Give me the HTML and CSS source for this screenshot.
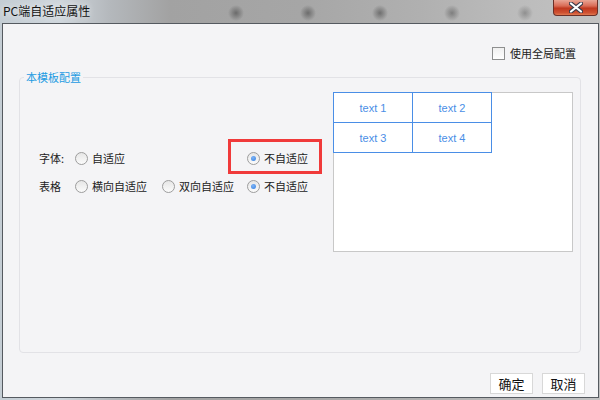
FILE: index.html
```html
<!DOCTYPE html>
<html lang="zh-CN">
<head>
    <meta charset="UTF-8">
    <title>PC端自适应属性</title>
    <link rel="stylesheet" href="styles.css">
</head>
<body>

<div class="window">
    <div class="titlebar">
        <span class="title">PC端自适应属性</span>
        <button class="close-btn" type="button">
            <svg width="14" height="11" viewBox="0 0 14 11">
                <path d="M2 1.5 L12 9.5 M12 1.5 L2 9.5" stroke="#3a3a4a" stroke-width="4.2" stroke-linecap="round"/>
                <path d="M2 1.5 L12 9.5 M12 1.5 L2 9.5" stroke="#ffffff" stroke-width="2.2" stroke-linecap="round"/>
            </svg>
        </button>
    </div>

    <div class="client">
        <div class="global-row">
            <label class="check">
                <span class="check-box"></span>
                使用全局配置
            </label>
        </div>

        <fieldset class="group">
            <legend>本模板配置</legend>

            <div class="group-body">
                <div class="options">
                    <span class="opt-label">字体:</span>
                    <label class="radio"><span class="radio-dot"></span>自适应</label>
                    <span></span>
                    <label class="radio checked highlight"><span class="radio-dot"></span>不自适应</label>

                    <span class="opt-label">表格</span>
                    <label class="radio"><span class="radio-dot"></span>横向自适应</label>
                    <label class="radio"><span class="radio-dot"></span>双向自适应</label>
                    <label class="radio checked"><span class="radio-dot"></span>不自适应</label>
                </div>

                <div class="preview">
                    <table class="preview-table">
                        <tr><td>text 1</td><td>text 2</td></tr>
                        <tr><td>text 3</td><td>text 4</td></tr>
                    </table>
                </div>
            </div>
        </fieldset>

        <div class="footer">
            <button class="btn" type="button">确定</button>
            <button class="btn" type="button">取消</button>
        </div>
    </div>
</div>

</body>
</html>
```

FILE: styles.css
```css
* {
    margin: 0;
    padding: 0;
    box-sizing: border-box;
}

body {
    width: 600px;
    height: 400px;
    overflow: hidden;
    font-family: "Noto Sans CJK SC", "Liberation Sans", sans-serif;
    font-size: 11px;
    color: #222;
}

/* glass frame */
.window {
    height: 400px;
    display: flex;
    flex-direction: column;
    padding: 0 1px 2px 2px;
    background:
        radial-gradient(circle at 236px 13px, rgba(60, 60, 60, 0.55) 0, rgba(70, 70, 70, 0) 8px),
        radial-gradient(circle at 308px 13px, rgba(60, 60, 60, 0.55) 0, rgba(70, 70, 70, 0) 8px),
        radial-gradient(circle at 380px 13px, rgba(60, 60, 60, 0.55) 0, rgba(70, 70, 70, 0) 8px),
        radial-gradient(circle at 452px 13px, rgba(60, 60, 60, 0.45) 0, rgba(70, 70, 70, 0) 8px),
        radial-gradient(circle at 525px 13px, rgba(60, 60, 60, 0.35) 0, rgba(70, 70, 70, 0) 8px),
        linear-gradient(90deg, #c4cdd4 0, #cfd6dc 60px, #b4b8bc 110px, #a2a2a2 170px, #a6a6a6 300px, #b0b0b0 420px, #bcbcbc 520px, #c2c2c2 600px);
}

.titlebar {
    height: 23px;
    display: flex;
    justify-content: space-between;
    align-items: flex-start;
}

.title {
    font-size: 12px;
    line-height: 16px;
    padding: 3px 0 0 1px;
    color: #111;
    text-shadow: 0 0 6px rgba(255, 255, 255, 0.9);
}

.close-btn {
    width: 45px;
    height: 16px;
    margin-right: 1px;
    border: 1px solid #6b3028;
    border-top: none;
    border-radius: 0 0 4px 4px;
    background: linear-gradient(#e9a595 0, #d96b55 40%, #c0381f 55%, #cf5232 85%, #e07a52 100%);
    display: flex;
    justify-content: center;
    align-items: center;
}

.client {
    flex: 1;
    display: flex;
    flex-direction: column;
    border: 1px solid #555a60;
    background-color: #f4f4f6;
}

.global-row {
    display: flex;
    justify-content: flex-end;
    padding: 22px 22px 0 0;
    height: 45px;
}

.check {
    display: flex;
    align-items: center;
    gap: 5px;
    height: 15px;
    line-height: 15px;
}

.check-box {
    width: 13px;
    height: 13px;
    border: 1px solid #8e8f8f;
    background: linear-gradient(#f0f0f0, #ffffff);
}

/* template group */
.group {
    margin: 0 17px 0 16px;
    height: 284px;
    border: 1px solid #e2e2e6;
    border-radius: 4px;
    padding: 0 7px 0 0;
}

.group legend {
    margin-left: 4px;
    padding: 0 2px;
    line-height: 16px;
    color: #1c9be2;
}

.group-body {
    display: flex;
    align-items: flex-start;
}

.options {
    flex: 1;
    display: grid;
    grid-template-columns: 36px 87px 85px auto;
    grid-auto-rows: 28px;
    align-items: center;
    justify-items: start;
    padding: 59px 0 0 19px;
}

.opt-label {
    line-height: 16px;
}

.radio {
    position: relative;
    display: flex;
    align-items: center;
    gap: 4px;
    line-height: 16px;
    white-space: nowrap;
}

.radio-dot {
    width: 13px;
    height: 13px;
    border-radius: 50%;
    border: 1px solid #9d9d9d;
    background: linear-gradient(#e6e6e6, #fbfbfb);
    display: flex;
    justify-content: center;
    align-items: center;
}

.radio.checked .radio-dot::after {
    content: "";
    width: 5px;
    height: 5px;
    border-radius: 50%;
    background: radial-gradient(circle at 40% 35%, #7fb4f5, #2f7de0);
}

/* red annotation frame */
.highlight::after {
    content: "";
    position: absolute;
    left: -19px;
    right: -14px;
    top: -11px;
    bottom: -8px;
    border: 3px solid #f03a3a;
}

.preview {
    width: 240px;
    height: 160px;
    margin-top: 7px;
    border: 1px solid #c8c8c8;
    background-color: #fff;
}

.preview-table {
    border-collapse: collapse;
    margin: -1px 0 0 -1px;
}

.preview-table td {
    width: 79px;
    height: 30px;
    border: 1px solid #4a8ee6;
    text-align: center;
    font-family: "Liberation Sans", sans-serif;
    font-size: 11px;
    color: #4a8ee6;
}

.footer {
    display: flex;
    justify-content: flex-end;
    gap: 9px;
    padding: 20px 13px 0 0;
}

.btn {
    width: 43px;
    height: 21px;
    border: 1px solid #d8d8d8;
    background-color: #fff;
    font-family: "Noto Sans CJK SC", sans-serif;
    font-size: 13px;
    line-height: 19px;
    color: #111;
}
```
